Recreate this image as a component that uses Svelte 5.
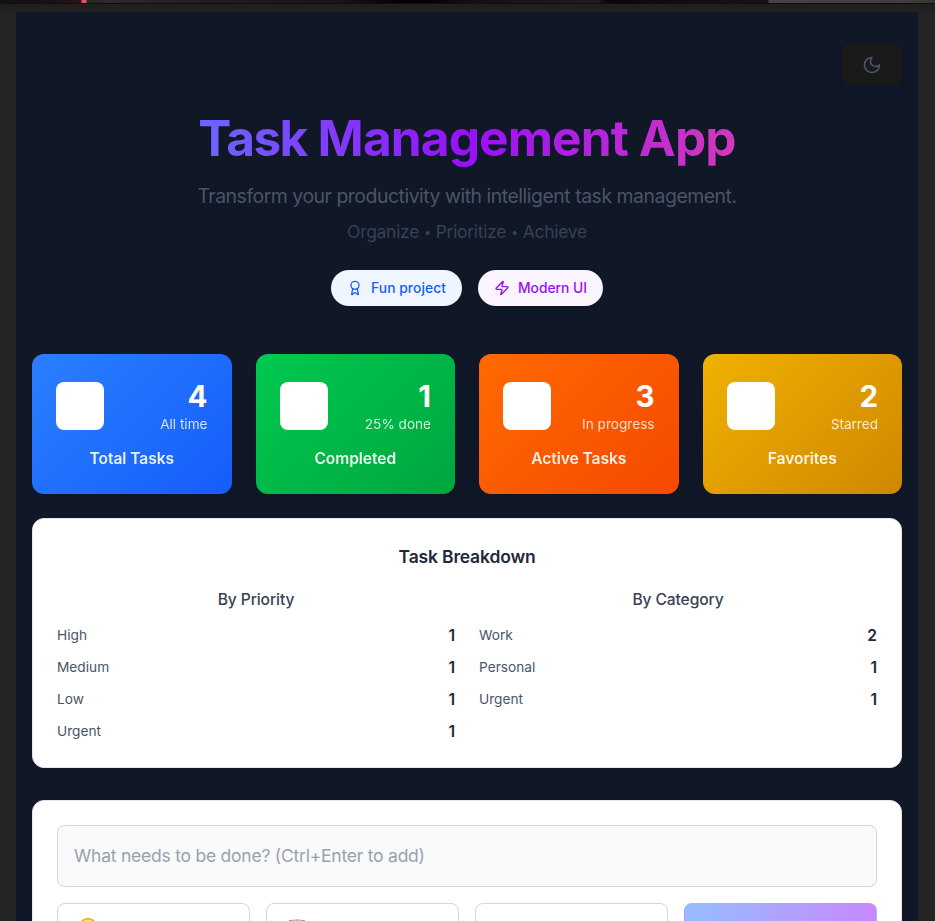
<script>
  const stats = [
    { value: 4, note: 'All time', label: 'Total Tasks', tone: 'blue' },
    { value: 1, note: '25% done', label: 'Completed', tone: 'green' },
    { value: 3, note: 'In progress', label: 'Active Tasks', tone: 'orange' },
    { value: 2, note: 'Starred', label: 'Favorites', tone: 'yellow' }
  ];
  const groups = [
    { title: 'By Priority', rows: [['High', 1], ['Medium', 1], ['Low', 1], ['Urgent', 1]] },
    { title: 'By Category', rows: [['Work', 2], ['Personal', 1], ['Urgent', 1]] }
  ];
</script>

<div class="page">
  <div class="strip"></div>
  <main>
    <div class="toolbar">
      <button class="theme" aria-label="Toggle theme">
        <svg width="20" height="20" viewBox="0 0 24 24" fill="none" stroke="currentColor" stroke-width="2" stroke-linecap="round" stroke-linejoin="round"><path d="M12 3a6 6 0 0 0 9 9 9 9 0 1 1-9-9Z" /></svg>
      </button>
    </div>
    <header>
      <h1><span class="tight">Task</span> Management App</h1>
      <p class="lead">Transform your productivity with intelligent task management.</p>
      <p class="sub">Organize <i>•</i> Prioritize <i>•</i> Achieve</p>
      <div class="badges">
        <span class="badge fun">
          <svg width="16" height="16" viewBox="0 0 24 24" fill="none" stroke="currentColor" stroke-width="2" stroke-linecap="round" stroke-linejoin="round"><path d="m15.477 12.89 1.515 8.526a.5.5 0 0 1-.81.47l-3.58-2.687a1 1 0 0 0-1.197 0l-3.586 2.686a.5.5 0 0 1-.81-.469l1.514-8.526" /><circle cx="12" cy="8" r="6" /></svg>
          <span>Fun project</span>
        </span>
        <span class="badge modern">
          <svg width="16" height="16" viewBox="0 0 24 24" fill="none" stroke="currentColor" stroke-width="2" stroke-linecap="round" stroke-linejoin="round"><path d="M4 14a1 1 0 0 1-.78-1.63l9.9-10.2a.5.5 0 0 1 .86.46l-1.92 6.02A1 1 0 0 0 13 10h7a1 1 0 0 1 .78 1.63l-9.9 10.2a.5.5 0 0 1-.86-.46l1.92-6.02A1 1 0 0 0 11 14z" /></svg>
          <span>Modern UI</span>
        </span>
      </div>
    </header>

    <section class="stats">
      {#each stats as s}
        <article class="stat {s.tone}">
          <div class="top">
            <div class="tile"></div>
            <div class="figures">
              <div class="value">{s.value}</div>
              <div class="note">{s.note}</div>
            </div>
          </div>
          <h3>{s.label}</h3>
        </article>
      {/each}
    </section>

    <section class="card breakdown">
      <h2>Task Breakdown</h2>
      <div class="groups">
        {#each groups as g}
          <div>
            <h4>{g.title}</h4>
            <div class="rows">
              {#each g.rows as [name, count]}
                <div class="row"><span>{name}</span><b>{count}</b></div>
              {/each}
            </div>
          </div>
        {/each}
      </div>
    </section>

    <section class="card form">
      <input placeholder="What needs to be done? (Ctrl+Enter to add)" />
      <div class="controls">
        <div class="select">
          <svg width="20" height="20" viewBox="0 0 20 20"><circle cx="10" cy="10" r="9.2" fill="#ffe45c" stroke="#eaa51b" stroke-width="1.5" /></svg>
        </div>
        <div class="select">
          <svg width="20" height="20" viewBox="0 0 20 20"><rect x="2" y="2" width="16" height="18" rx="1" fill="#c9802b" /><path d="M4.500 4V1.800h3a2.800 1.500 0 0 1 5 0h3V4z" fill="#b9bdc2" /></svg>
        </div>
        <div class="select"></div>
        <button class="add" aria-label="Add task"></button>
      </div>
    </section>
  </main>
</div>

<style>
  :global(body) { margin: 0; background: #242424; }
  .page {
    box-sizing: border-box;
    height: 921px;
    overflow: hidden;
    background: linear-gradient(#1c1c1c, #242424 14px);
    font-family: Inter, "Liberation Sans", sans-serif;
    color: #1e2939;
  }
  .page :global(*) { box-sizing: border-box; }
  h1, h2, h3, h4, p { margin: 0; }
  svg { display: block; flex: none; }
  .strip {
    height: 4px;
    border-bottom: 1px solid #2b0008;
    background: linear-gradient(90deg, #121212 0, #191314 60px, #321216 81px, #d9566b 82px, #d9566b 86px, #262626 87px, #2b2b2b 110px, #1f1f1f 200px, #161616 340px, #020202 400px, #000 425px, #111 470px, #1e1e1e 598px, #070707 606px, #151515 768px, #444 769px, #3f3f3f 900px, #353535);
  }
  main {
    margin: 8px 17px 0 16px;
    height: 1000px;
    padding: 32px 16px 0;
    background: #101726;
  }
  .toolbar { display: flex; justify-content: flex-end; }
  .theme {
    display: flex;
    align-items: center;
    justify-content: center;
    width: 60px;
    height: 41px;
    padding: 0;
    border: 0;
    border-radius: 8px;
    background: #1a1a1a;
    color: #4a5565;
    box-shadow: 0 4px 6px rgb(0 0 0 / .06);
  }
  header { text-align: center; white-space: nowrap; }
  h1 {
    margin-top: 23px;
    height: 60px;
    font-size: 49.6px;
    line-height: 60px;
    font-weight: 700;
    letter-spacing: -.9px;
    background: linear-gradient(90deg, #4f7cff 0, #6b66ff 170px, #9810fa 435px, #d63bb8 720px, #e60076 870px);
    -webkit-background-clip: text;
    background-clip: text;
    color: transparent;
  }
  .tight { letter-spacing: -1.6px; }
  .lead { margin-top: 14px; font-size: 19.4px; line-height: 28px; letter-spacing: -.46px; color: #4a5565; }
  .sub { margin-top: 8px; font-size: 17.5px; line-height: 28px; letter-spacing: -.3px; color: #364153; }
  .sub i { display: inline-block; width: 7.4px; font-style: normal; font-size: 13px; line-height: 1; vertical-align: 1px; }
  .badges { display: flex; justify-content: center; gap: 16px; margin-top: 24px; }
  .badge {
    display: flex;
    align-items: center;
    gap: 8px;
    height: 36px;
    padding: 0 16px;
    border-radius: 18px;
    font-size: 13.8px;
    font-weight: 500;
  }
  .fun { width: 131px; letter-spacing: .08px; background: #eff6ff; color: #155dfc; }
  .modern { width: 125px; background: #faf5ff; color: #9810fa; }
  .stats { display: grid; grid-template-columns: repeat(4, 1fr); gap: 24px; margin-top: 48px; }
  .stat {
    height: 140px;
    padding: 24px;
    border-radius: 12px;
    color: #fff;
    box-shadow: 0 10px 15px -3px rgb(0 0 0 / .06);
  }
  .blue { background: linear-gradient(135deg, #2b7fff, #155dfc); }
  .green { background: linear-gradient(135deg, #00c950, #00a63e); }
  .orange { background: linear-gradient(135deg, #ff6900, #f54900); }
  .yellow { background: linear-gradient(135deg, #f0b100, #d08700); }
  .top { display: flex; align-items: center; justify-content: space-between; height: 56px; }
  .tile { width: 48px; height: 48px; border-radius: 8px; background: #fff; }
  .figures { text-align: right; }
  .value { font-size: 29.5px; line-height: 36px; font-weight: 700; }
  .note { font-size: 13.6px; line-height: 20px; opacity: .8; }
  .stat h3 { margin-top: 13px; text-align: center; font-size: 15.6px; line-height: 24px; font-weight: 600; letter-spacing: -.07px; opacity: .9; }
  .card {
    border: 1px solid #e5e7eb;
    border-radius: 12px;
    background: #fff;
    padding: 24px;
    box-shadow: 0 10px 15px -3px rgb(0 0 0 / .06);
  }
  .breakdown { height: 250px; margin-top: 24px; }
  h2 { text-align: center; font-size: 17.5px; line-height: 28px; font-weight: 600; letter-spacing: -.17px; }
  .groups { display: grid; grid-template-columns: 1fr 1fr; gap: 24px; margin-top: 17px; }
  h4 { text-align: center; font-size: 15.6px; line-height: 24px; font-weight: 500; letter-spacing: -.1px; color: #364153; }
  .rows { display: flex; flex-direction: column; gap: 8px; margin-top: 11px; }
  .row { display: flex; justify-content: space-between; align-items: center; height: 24px; }
  .row span { font-size: 13.7px; color: #4a5565; }
  .row b { font-size: 15.6px; font-weight: 600; }
  .form { margin-top: 32px; height: 300px; }
  input {
    display: block;
    width: 100%;
    height: 62px;
    padding: 0 16px 2px;
    border: 1px solid #d1d5dc;
    border-radius: 8px;
    background: #f9fafb;
    font: 17.5px Inter, "Liberation Sans", sans-serif;
    letter-spacing: -.23px;
  }
  input::placeholder { color: #99a1af; opacity: 1; }
  .controls { display: grid; grid-template-columns: repeat(4, 1fr); gap: 16px; margin-top: 16px; }
  .select { height: 50px; padding: 14px 20px; border: 1px solid #d1d5dc; border-radius: 8px; background: #fff; }
  .add {
    height: 50px;
    border: 1px solid transparent;
    border-radius: 8px;
    background: linear-gradient(to right, #95bdff, #c888ff);
  }
</style>
